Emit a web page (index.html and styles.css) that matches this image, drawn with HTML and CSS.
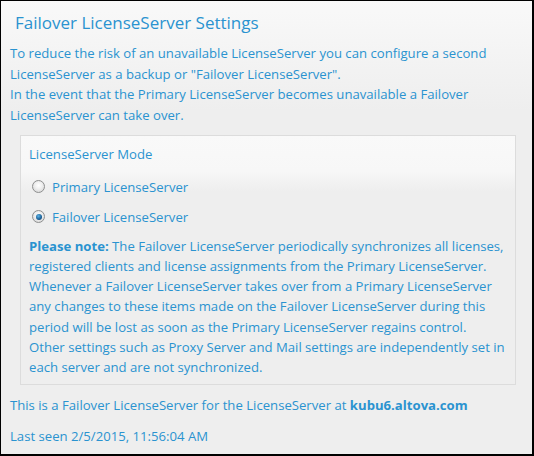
FILE: index.html
```html
<!DOCTYPE html>
<html>
<head>
<meta charset="utf-8">
<link rel="stylesheet" href="styles.css">
</head>
<body>
<div class="panel">
  <h1 class="title">Failover LicenseServer Settings</h1>
  <p class="intro">To reduce the risk of an unavailable LicenseServer you can configure a second<br>LicenseServer as a backup or "Failover LicenseServer".<br>In the event that the Primary LicenseServer becomes unavailable a Failover<br>LicenseServer can take over.</p>
  <div class="mode">
    <div class="mode-title">LicenseServer Mode</div>
    <label class="radio"><span class="dot"></span>Primary LicenseServer</label>
    <label class="radio"><span class="dot checked"></span>Failover LicenseServer</label>
    <p class="note"><b>Please note:</b> The Failover LicenseServer periodically synchronizes all licenses,<br>registered clients and license assignments from the Primary LicenseServer.<br>Whenever a Failover LicenseServer takes over from a Primary LicenseServer<br>any changes to these items made on the Failover LicenseServer during this<br>period will be lost as soon as the Primary LicenseServer regains control.<br>Other settings such as Proxy Server and Mail settings are independently set in<br>each server and are not synchronized.</p>
  </div>
  <p class="info">This is a Failover LicenseServer for the LicenseServer at <b>kubu6.altova.com</b></p>
  <p class="seen">Last seen 2/5/2015, 11:56:04 AM</p>
</div>
</body>
</html>
```
FILE: styles.css
```css
html, body { margin: 0; padding: 0; }
body { width: 534px; height: 456px; overflow: hidden; }
.panel {
  box-sizing: border-box;
  width: 534px;
  height: 456px;
  border-style: solid;
  border-color: #000;
  border-width: 1px 2px 2px 1px;
  background: linear-gradient(#f9f9f9 0px, #eeeeee 110px, #eeeeee 100%);
  padding: 0 0 0 9px;
  font-family: "Open Sans", "Noto Sans", sans-serif;
  font-size: 13.15px;
  color: #2a93d0;
  white-space: nowrap;
}
.title {
  margin: 0;
  padding: 12px 0 0 5px;
  font-size: 17px;
  font-weight: normal;
  line-height: 20px;
  height: 30px;
  box-sizing: border-box;
}
.intro {
  margin: 12px 0 0 0;
  line-height: 20.7px;
}
.mode {
  margin: 9px 0 0 10px;
  width: 496px;
  box-sizing: border-box;
  height: 250px;
  border: 1px solid #dcdcdc;
  background: linear-gradient(#f9f9f9 0px, #f7f7f7 35px, #eeeeee 55px, #eeeeee 100%);
  padding: 8px 0 0 8px;
}
.mode-title { line-height: 20px; }
.radio {
  display: flex;
  align-items: center;
  line-height: 20px;
  margin-top: 13px;
  padding-left: 3px;
}
.radio + .radio { margin-top: 10px; }
.dot {
  width: 11px; height: 11px;
  border-radius: 50%;
  border: 1px solid #8e8f8f;
  background: radial-gradient(circle at 50% 40%, #ffffff 0, #f0f0f0 40%, #cfcfcf 100%);
  margin-right: 7px;
  position: relative;
  flex: none;
}
.dot.checked::after {
  content: "";
  position: absolute;
  left: 2.5px; top: 2.5px;
  width: 6px; height: 6px;
  border-radius: 50%;
  background: radial-gradient(circle at 40% 35%, #5bb3e8 0, #1b5f95 60%, #0d3a66 100%);
}
.note {
  margin: 9px 0 0 0;
  line-height: 20.2px;
}
.note b { font-weight: bold; }
.info { margin: 10px 0 0 0; line-height: 20px; }
.info b { font-weight: bold; }
.seen { margin: 11px 0 0 0; line-height: 20px; }
```
